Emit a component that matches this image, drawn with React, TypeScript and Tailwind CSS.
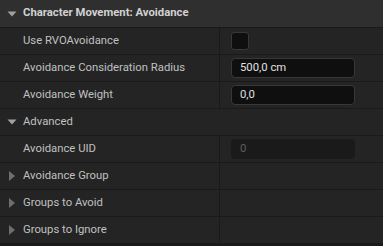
import { ReactNode } from "react";

const font = { fontFamily: "Roboto, 'Noto Sans', sans-serif" };

function Caret({ open }: { open: boolean }) {
  return open ? (
    <svg width="12" height="12" viewBox="0 0 12 12" className="shrink-0">
      <path d="M1.5 3.5 L10.5 3.5 L6 8.5 Z" fill="#a0a0a0" />
    </svg>
  ) : (
    <svg width="12" height="12" viewBox="0 0 12 12" className="shrink-0">
      <path d="M3 1 L9 6 L3 11 Z" fill="#6e6e6e" />
    </svg>
  );
}

function Row({
  label,
  caret,
  children,
}: {
  label: string;
  caret?: "open" | "closed";
  children?: ReactNode;
}) {
  return (
    <div className="flex h-[27px] border-b border-[#1a1a1a] bg-[#242424]">
      <div className="flex w-[220px] shrink-0 items-center border-r border-[#1a1a1a]">
        <div className="flex w-[23px] shrink-0 justify-center">
          {caret && <Caret open={caret === "open"} />}
        </div>
        <span className="text-[11.3px] text-[#c0c0c0]">{label}</span>
      </div>
      <div className="flex flex-1 items-center pl-[11px]">{children}</div>
    </div>
  );
}

function NumberBox({ value, disabled }: { value: string; disabled?: boolean }) {
  return (
    <div
      className={
        disabled
          ? "flex h-[20px] w-[124px] items-center rounded-[4px] bg-[#1a1a1a] pl-[9px] text-[11.3px] text-[#5e5e5e]"
          : "flex h-[20px] w-[124px] items-center rounded-[4px] border border-[#383838] bg-[#0f0f0f] pl-[8px] text-[11.3px] text-[#e0e0e0]"
      }
    >
      {value}
    </div>
  );
}

export default function App() {
  return (
    <div className="h-[246px] w-[383px] overflow-hidden bg-[#1a1a1a]" style={font}>
      <div className="flex h-[28px] items-center border-b border-[#1a1a1a] bg-[#2f2f2f]">
        <div className="flex w-[23px] shrink-0 justify-center">
          <Caret open />
        </div>
        <span className="text-[11.3px] font-bold text-[#d2d2d2]">Character Movement: Avoidance</span>
      </div>
      <Row label="Use RVOAvoidance">
        <div className="h-[18px] w-[18px] rounded-[3px] border border-[#383838] bg-[#0f0f0f]" />
      </Row>
      <Row label="Avoidance Consideration Radius">
        <NumberBox value="500,0 cm" />
      </Row>
      <Row label="Avoidance Weight">
        <NumberBox value="0,0" />
      </Row>
      <div className="flex h-[27px] items-center border-b border-[#1a1a1a] bg-[#242424]">
        <div className="flex w-[23px] shrink-0 justify-center">
          <Caret open />
        </div>
        <span className="text-[11.3px] text-[#c0c0c0]">Advanced</span>
      </div>
      <Row label="Avoidance UID">
        <NumberBox value="0" disabled />
      </Row>
      <Row label="Avoidance Group" caret="closed" />
      <Row label="Groups to Avoid" caret="closed" />
      <Row label="Groups to Ignore" caret="closed" />
    </div>
  );
}
